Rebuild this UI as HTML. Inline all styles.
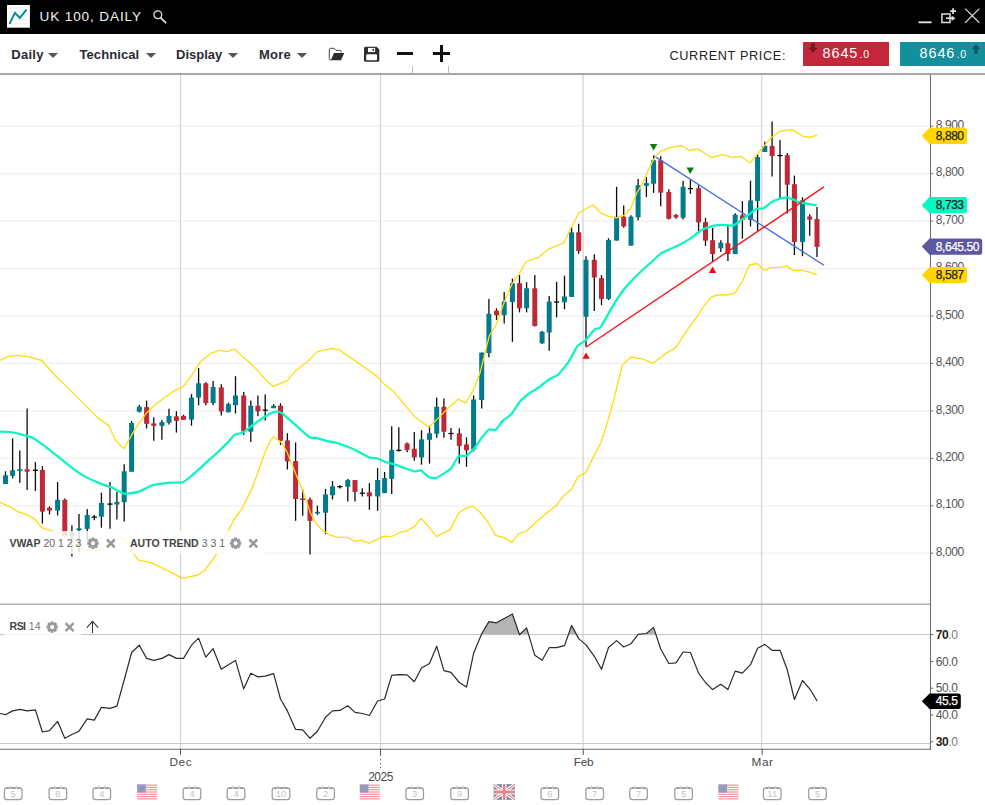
<!DOCTYPE html>
<html><head><meta charset="utf-8"><title>UK 100, DAILY</title>
<style>
html,body{margin:0;padding:0;background:#fff;}
body{width:985px;height:805px;position:relative;overflow:hidden;font-family:"Liberation Sans",sans-serif;}
#hdr{position:absolute;left:0;top:0;width:985px;height:34px;background:#000;}
#hdr .title{position:absolute;left:39.5px;top:8.5px;font-size:13.6px;color:#f0f0f0;letter-spacing:0.86px;line-height:16px;white-space:nowrap;}
#tb{position:absolute;left:0;top:34px;width:985px;height:38.8px;background:#fff;border-bottom:2.3px solid #a6a6a6;}
.mi{position:absolute;top:13px;font-size:13px;font-weight:bold;color:#2a2a32;line-height:15px;white-space:nowrap;}
.dd{position:absolute;top:18.6px;width:0;height:0;border-left:5.2px solid transparent;border-right:5.2px solid transparent;border-top:5.6px solid #555;}
.cp{position:absolute;left:669.5px;top:15.1px;font-size:12.7px;color:#222;letter-spacing:0.64px;line-height:15px;white-space:nowrap;}
.pb{position:absolute;top:8px;height:24px;color:#fff;font-size:14.4px;line-height:22.4px;white-space:nowrap;letter-spacing:0.95px;}
.pb small{font-size:10.5px;letter-spacing:0.8px;margin-left:1.2px;}
#chart{position:absolute;left:0;top:0;}
</style></head><body>
<div id="hdr">
<svg style="position:absolute;left:7px;top:5px" width="23" height="23" viewBox="7 5 23 23"><rect x="7" y="5" width="22.9" height="22.7" fill="#fff"/><path d="M9.1 7.9H27.4M9.1 11.4H27.4M9.1 15.3H27.4M9.1 19.6H27.4M9.1 23.8H27.4" stroke="#eeeeee" stroke-width="1.1"/><path d="M9.9 23.1L15 12.9L19.8 17.9L26.1 10.2" stroke="#0a8798" stroke-width="2" fill="none" stroke-linejoin="miter" stroke-linecap="round"/></svg>
<div class="title">UK 100, DAILY</div>
<svg style="position:absolute;left:152px;top:8.5px" width="16" height="16" viewBox="0 0 16 16"><circle cx="5.8" cy="5.8" r="3.9" stroke="#e2e2e2" stroke-width="1.3" fill="none"/><path d="M8.8 8.8L13.6 13.6" stroke="#e2e2e2" stroke-width="1.8" stroke-linecap="round"/></svg>
<svg style="position:absolute;left:910px;top:0px" width="75" height="34" viewBox="910 0 75 34"><path d="M918.6 22.3H931.6" stroke="#e0e0e0" stroke-width="1.9"/><path d="M941.9 13.9H950V22.4H941.9Z" stroke="#dedede" stroke-width="1.5" fill="none"/><path d="M946 18.2H952" stroke="#dedede" stroke-width="1.7"/><path d="M951.6 15.4L955.4 18.2L951.6 21Z" fill="#dedede"/><path d="M953.1 8.2V14M950.2 11.1H956" stroke="#e4e4e4" stroke-width="1.7"/><path d="M965.2 8.6L979.3 22.8M979.3 8.6L965.2 22.8" stroke="#d6d6d6" stroke-width="1.25"/></svg>
</div>
<div id="tb">
<div class="mi" style="left:11.2px;letter-spacing:0.3px">Daily</div><div class="dd" style="left:48px"></div>
<div class="mi" style="left:79.5px;letter-spacing:0.08px">Technical</div><div class="dd" style="left:145.7px"></div>
<div class="mi" style="left:176px">Display</div><div class="dd" style="left:228px"></div>
<div class="mi" style="left:258.9px;letter-spacing:0.3px">More</div><div class="dd" style="left:296.8px"></div>
<svg style="position:absolute;left:320px;top:6px" width="70" height="30" viewBox="320 40 70 30"><path d="M331.2 60.1Q329.3 60.1 329.3 58.6V49.6Q329.3 48.3 330.6 48.3H334.2L336 50.4H340.2Q341.1 50.4 341.1 51.6V52.6" stroke="#2e2e2e" stroke-width="0.9" fill="none"/><path d="M334 53.1H344.3L340.9 60.2H330.8Z" fill="#2c2c2c"/>
<path d="M365.6 46.8H376.6L379.3 49.4V60.2Q379.3 61.8 377.7 61.8H365.6Q364 61.8 364 60.2V48.4Q364 46.8 365.6 46.8Z" fill="#2c2c2c"/><rect x="368" y="47.9" width="7.1" height="4.2" fill="#fff"/><rect x="372.5" y="48.8" width="1.5" height="2.1" fill="#2c2c2c"/><rect x="366.2" y="54.2" width="10.8" height="6.1" rx="0.9" fill="#fff"/></svg>
<div style="position:absolute;left:397px;top:17.6px;width:16.4px;height:3.6px;background:#111"></div>
<div style="position:absolute;left:433px;top:17.6px;width:16.8px;height:3.6px;background:#111"></div>
<div style="position:absolute;left:439.6px;top:11.2px;width:3.6px;height:16.4px;background:#111"></div>
<div style="position:absolute;left:412px;top:31.5px;width:1px;height:8px;background:#bbb"></div>
<div style="position:absolute;left:448.4px;top:31.5px;width:1px;height:8px;background:#bbb"></div>
<div class="cp">CURRENT PRICE:</div>
<div class="pb" style="left:803px;width:86px;background:#c3283a"><span style="position:absolute;left:19.5px">8645<small>.0</small></span>
<svg style="position:absolute;left:5px;top:0.5px" width="10" height="10" viewBox="0 0 10 10"><path d="M3 0H7V4.8H9.6L5 9.8L0.4 4.8H3Z" fill="#7d1320"/></svg></div>
<div class="pb" style="left:900px;width:85px;background:#14909c"><span style="position:absolute;left:19.5px">8646<small>.0</small></span>
<svg style="position:absolute;left:71px;top:1.5px" width="10" height="10" viewBox="0 0 10 10"><path d="M3 9.8H7V5H9.6L5 0L0.4 5H3Z" fill="#0b5d66"/></svg></div>
</div>
<svg id="chart" width="985" height="805" viewBox="0 0 985 805">
<defs><clipPath id="cp"><rect x="0" y="75" width="985" height="730"/></clipPath></defs>
<g clip-path="url(#cp)">
<line x1="0" y1="126.2" x2="929" y2="126.2" stroke="#f0f0f0" stroke-width="1.3"/>
<line x1="0" y1="173.7" x2="929" y2="173.7" stroke="#f0f0f0" stroke-width="1.3"/>
<line x1="0" y1="221.1" x2="929" y2="221.1" stroke="#f0f0f0" stroke-width="1.3"/>
<line x1="0" y1="268.6" x2="929" y2="268.6" stroke="#f0f0f0" stroke-width="1.3"/>
<line x1="0" y1="316" x2="929" y2="316" stroke="#f0f0f0" stroke-width="1.3"/>
<line x1="0" y1="363.4" x2="929" y2="363.4" stroke="#f0f0f0" stroke-width="1.3"/>
<line x1="0" y1="410.9" x2="929" y2="410.9" stroke="#f0f0f0" stroke-width="1.3"/>
<line x1="0" y1="458.4" x2="929" y2="458.4" stroke="#f0f0f0" stroke-width="1.3"/>
<line x1="0" y1="505.8" x2="929" y2="505.8" stroke="#f0f0f0" stroke-width="1.3"/>
<line x1="0" y1="553.2" x2="929" y2="553.2" stroke="#f0f0f0" stroke-width="1.3"/>
<line x1="180.5" y1="75" x2="180.5" y2="749" stroke="#d2d2d2" stroke-width="1.2"/>
<line x1="380.5" y1="75" x2="380.5" y2="749" stroke="#d4d4d4" stroke-width="1.2"/>
<line x1="583.05" y1="75" x2="583.05" y2="749" stroke="#e1e1e1" stroke-width="1.9"/>
<line x1="761.6" y1="75" x2="761.6" y2="749" stroke="#dadada" stroke-width="1.5"/>
<line x1="5.5" y1="471.3" x2="5.5" y2="483.9" stroke="#0c0c0c" stroke-width="1.3"/>
<rect x="3" y="475.4" width="5" height="8.5" fill="#027b8c"/>
<line x1="12.6" y1="438.3" x2="12.6" y2="478.4" stroke="#0c0c0c" stroke-width="1.3"/>
<rect x="10.1" y="470.3" width="5" height="5.5" fill="#027b8c"/>
<line x1="19.8" y1="450.5" x2="19.8" y2="482.9" stroke="#0c0c0c" stroke-width="1.3"/>
<rect x="17.3" y="469.2" width="5" height="1.7" fill="#027b8c"/>
<line x1="27.1" y1="408.6" x2="27.1" y2="490" stroke="#0c0c0c" stroke-width="1.3"/>
<rect x="24.6" y="469.2" width="5" height="2.5" fill="#be2837"/>
<line x1="35.4" y1="462.1" x2="35.4" y2="491" stroke="#0c0c0c" stroke-width="1.3"/>
<line x1="32.8" y1="470.3" x2="38" y2="470.3" stroke="#0c0c0c" stroke-width="1.3"/>
<line x1="42.4" y1="466.2" x2="42.4" y2="523.6" stroke="#0c0c0c" stroke-width="1.3"/>
<rect x="39.9" y="469.9" width="5" height="41.7" fill="#be2837"/>
<line x1="49.5" y1="506.3" x2="49.5" y2="514.5" stroke="#0c0c0c" stroke-width="1.3"/>
<rect x="47" y="507.9" width="5" height="2.7" fill="#be2837"/>
<line x1="57.6" y1="482.1" x2="57.6" y2="515.5" stroke="#0c0c0c" stroke-width="1.3"/>
<rect x="55.1" y="499.8" width="5" height="10.8" fill="#027b8c"/>
<line x1="64.8" y1="498.6" x2="64.8" y2="536.4" stroke="#0c0c0c" stroke-width="1.3"/>
<rect x="62.3" y="499.8" width="5" height="36.6" fill="#be2837"/>
<line x1="71.9" y1="525.3" x2="71.9" y2="556.4" stroke="#0c0c0c" stroke-width="1.3"/>
<rect x="69.4" y="532" width="5" height="3.4" fill="#027b8c"/>
<line x1="79" y1="514.1" x2="79" y2="551.7" stroke="#0c0c0c" stroke-width="1.3"/>
<rect x="76.5" y="528.3" width="5" height="2" fill="#027b8c"/>
<line x1="87.2" y1="509" x2="87.2" y2="540.5" stroke="#0c0c0c" stroke-width="1.3"/>
<rect x="84.7" y="515.1" width="5" height="13.8" fill="#027b8c"/>
<line x1="94.3" y1="515.1" x2="94.3" y2="520.2" stroke="#0c0c0c" stroke-width="1.3"/>
<line x1="91.7" y1="517.1" x2="96.9" y2="517.1" stroke="#0c0c0c" stroke-width="1.3"/>
<line x1="101.4" y1="492.7" x2="101.4" y2="527.7" stroke="#0c0c0c" stroke-width="1.3"/>
<rect x="98.9" y="502.9" width="5" height="13.8" fill="#027b8c"/>
<line x1="110" y1="482.1" x2="110" y2="528.7" stroke="#0c0c0c" stroke-width="1.3"/>
<line x1="107.4" y1="504.1" x2="112.6" y2="504.1" stroke="#0c0c0c" stroke-width="1.3"/>
<line x1="116.9" y1="492.1" x2="116.9" y2="519.6" stroke="#0c0c0c" stroke-width="1.3"/>
<rect x="114.4" y="501.8" width="5" height="2.7" fill="#027b8c"/>
<line x1="124.2" y1="464.2" x2="124.2" y2="521.6" stroke="#0c0c0c" stroke-width="1.3"/>
<rect x="121.7" y="471.3" width="5" height="30.9" fill="#027b8c"/>
<line x1="131.6" y1="421" x2="131.6" y2="471.7" stroke="#0c0c0c" stroke-width="1.3"/>
<rect x="129.1" y="423" width="5" height="48.7" fill="#027b8c"/>
<line x1="139.3" y1="405.1" x2="139.3" y2="412.6" stroke="#0c0c0c" stroke-width="1.3"/>
<rect x="136.8" y="406.7" width="5" height="5.1" fill="#027b8c"/>
<line x1="146.6" y1="400.6" x2="146.6" y2="428.5" stroke="#0c0c0c" stroke-width="1.3"/>
<rect x="144.1" y="407.1" width="5" height="16.7" fill="#be2837"/>
<line x1="153.8" y1="417.3" x2="153.8" y2="440.7" stroke="#0c0c0c" stroke-width="1.3"/>
<rect x="151.3" y="423.4" width="5" height="2.5" fill="#be2837"/>
<line x1="161.9" y1="420" x2="161.9" y2="439.7" stroke="#0c0c0c" stroke-width="1.3"/>
<rect x="159.4" y="422" width="5" height="3.9" fill="#027b8c"/>
<line x1="169" y1="408.8" x2="169" y2="424.4" stroke="#0c0c0c" stroke-width="1.3"/>
<rect x="166.5" y="415.9" width="5" height="6.9" fill="#027b8c"/>
<line x1="176.4" y1="411.2" x2="176.4" y2="432.6" stroke="#0c0c0c" stroke-width="1.3"/>
<rect x="173.9" y="416.3" width="5" height="4.5" fill="#be2837"/>
<line x1="183.5" y1="414.7" x2="183.5" y2="419.8" stroke="#0c0c0c" stroke-width="1.3"/>
<rect x="181" y="415.9" width="5" height="3.9" fill="#be2837"/>
<line x1="191.5" y1="394.1" x2="191.5" y2="425.7" stroke="#0c0c0c" stroke-width="1.3"/>
<rect x="189" y="397.6" width="5" height="22" fill="#027b8c"/>
<line x1="198.6" y1="368.1" x2="198.6" y2="405.3" stroke="#0c0c0c" stroke-width="1.3"/>
<rect x="196.1" y="383.3" width="5" height="14.3" fill="#027b8c"/>
<line x1="205.8" y1="382.3" x2="205.8" y2="405.3" stroke="#0c0c0c" stroke-width="1.3"/>
<rect x="203.3" y="383.3" width="5" height="19.8" fill="#be2837"/>
<line x1="213.1" y1="380.9" x2="213.1" y2="405.3" stroke="#0c0c0c" stroke-width="1.3"/>
<rect x="210.6" y="387" width="5" height="16.1" fill="#027b8c"/>
<line x1="221.3" y1="384.3" x2="221.3" y2="415.5" stroke="#0c0c0c" stroke-width="1.3"/>
<rect x="218.8" y="387.4" width="5" height="24" fill="#be2837"/>
<line x1="228.4" y1="402.7" x2="228.4" y2="412.3" stroke="#0c0c0c" stroke-width="1.3"/>
<rect x="225.9" y="404.1" width="5" height="8.2" fill="#027b8c"/>
<line x1="235.5" y1="376.2" x2="235.5" y2="413.5" stroke="#0c0c0c" stroke-width="1.3"/>
<rect x="233" y="395.5" width="5" height="9.6" fill="#027b8c"/>
<line x1="243.7" y1="392.1" x2="243.7" y2="434.9" stroke="#0c0c0c" stroke-width="1.3"/>
<rect x="241.2" y="395.5" width="5" height="36.1" fill="#be2837"/>
<line x1="250.8" y1="400.6" x2="250.8" y2="442" stroke="#0c0c0c" stroke-width="1.3"/>
<rect x="248.3" y="405.7" width="5" height="25.9" fill="#027b8c"/>
<line x1="257.9" y1="395.5" x2="257.9" y2="416.3" stroke="#0c0c0c" stroke-width="1.3"/>
<rect x="255.4" y="405.7" width="5" height="5.7" fill="#be2837"/>
<line x1="265.2" y1="394.5" x2="265.2" y2="420.4" stroke="#0c0c0c" stroke-width="1.3"/>
<line x1="262.6" y1="410.2" x2="267.8" y2="410.2" stroke="#0c0c0c" stroke-width="1.3"/>
<line x1="273.6" y1="404.1" x2="273.6" y2="408.2" stroke="#0c0c0c" stroke-width="1.3"/>
<rect x="271.1" y="405.7" width="5" height="2.5" fill="#027b8c"/>
<line x1="280.5" y1="403.3" x2="280.5" y2="445" stroke="#0c0c0c" stroke-width="1.3"/>
<rect x="278" y="405.7" width="5" height="35.1" fill="#be2837"/>
<line x1="287.4" y1="433.2" x2="287.4" y2="469.5" stroke="#0c0c0c" stroke-width="1.3"/>
<rect x="284.9" y="440.4" width="5" height="20.9" fill="#be2837"/>
<line x1="295.6" y1="442.4" x2="295.6" y2="520.8" stroke="#0c0c0c" stroke-width="1.3"/>
<rect x="293.1" y="461.1" width="5" height="37.9" fill="#be2837"/>
<line x1="302.7" y1="489.2" x2="302.7" y2="515.7" stroke="#0c0c0c" stroke-width="1.3"/>
<rect x="300.2" y="498.4" width="5" height="1.6" fill="#be2837"/>
<line x1="310" y1="497.4" x2="310" y2="554.5" stroke="#0c0c0c" stroke-width="1.3"/>
<rect x="307.5" y="499.5" width="5" height="21.4" fill="#be2837"/>
<line x1="317.4" y1="505.6" x2="317.4" y2="514.9" stroke="#0c0c0c" stroke-width="1.3"/>
<rect x="314.9" y="511.9" width="5" height="1.6" fill="#027b8c"/>
<line x1="325.5" y1="488.9" x2="325.5" y2="534.1" stroke="#0c0c0c" stroke-width="1.3"/>
<rect x="323" y="494.5" width="5" height="18.2" fill="#027b8c"/>
<line x1="332.5" y1="481.1" x2="332.5" y2="499.5" stroke="#0c0c0c" stroke-width="1.3"/>
<rect x="330" y="486.3" width="5" height="8.9" fill="#027b8c"/>
<line x1="339.8" y1="485.2" x2="339.8" y2="488.4" stroke="#0c0c0c" stroke-width="1.3"/>
<line x1="337.2" y1="486.7" x2="342.4" y2="486.7" stroke="#0c0c0c" stroke-width="1.3"/>
<line x1="347.8" y1="479.1" x2="347.8" y2="501.6" stroke="#0c0c0c" stroke-width="1.3"/>
<rect x="345.3" y="480.1" width="5" height="6.7" fill="#027b8c"/>
<line x1="355" y1="480.1" x2="355" y2="501.6" stroke="#0c0c0c" stroke-width="1.3"/>
<rect x="352.5" y="480.1" width="5" height="11.8" fill="#be2837"/>
<line x1="362.3" y1="488.3" x2="362.3" y2="496.5" stroke="#0c0c0c" stroke-width="1.3"/>
<line x1="359.7" y1="493.2" x2="364.9" y2="493.2" stroke="#0c0c0c" stroke-width="1.3"/>
<line x1="369.4" y1="483.2" x2="369.4" y2="509.8" stroke="#0c0c0c" stroke-width="1.3"/>
<rect x="366.9" y="492.3" width="5" height="4.1" fill="#be2837"/>
<line x1="377.6" y1="467.9" x2="377.6" y2="510.8" stroke="#0c0c0c" stroke-width="1.3"/>
<rect x="375.1" y="480.1" width="5" height="16.3" fill="#027b8c"/>
<line x1="384.6" y1="472" x2="384.6" y2="493.1" stroke="#0c0c0c" stroke-width="1.3"/>
<rect x="382.1" y="478.1" width="5" height="15" fill="#027b8c"/>
<line x1="391.7" y1="426.2" x2="391.7" y2="494" stroke="#0c0c0c" stroke-width="1.3"/>
<rect x="389.2" y="450" width="5" height="28.8" fill="#027b8c"/>
<line x1="398.8" y1="427.2" x2="398.8" y2="451.4" stroke="#0c0c0c" stroke-width="1.3"/>
<line x1="396.2" y1="450.4" x2="401.4" y2="450.4" stroke="#0c0c0c" stroke-width="1.3"/>
<line x1="407.1" y1="442.4" x2="407.1" y2="452.3" stroke="#0c0c0c" stroke-width="1.3"/>
<rect x="404.6" y="443.5" width="5" height="6.4" fill="#be2837"/>
<line x1="414.3" y1="432.1" x2="414.3" y2="460.7" stroke="#0c0c0c" stroke-width="1.3"/>
<rect x="411.8" y="448.8" width="5" height="8.6" fill="#be2837"/>
<line x1="421.5" y1="430.2" x2="421.5" y2="464.7" stroke="#0c0c0c" stroke-width="1.3"/>
<rect x="419" y="439.4" width="5" height="18" fill="#027b8c"/>
<line x1="429.5" y1="425.5" x2="429.5" y2="463.7" stroke="#0c0c0c" stroke-width="1.3"/>
<rect x="427" y="433.3" width="5" height="6.5" fill="#027b8c"/>
<line x1="436.7" y1="397.6" x2="436.7" y2="437.8" stroke="#0c0c0c" stroke-width="1.3"/>
<rect x="434.2" y="406.8" width="5" height="26.9" fill="#027b8c"/>
<line x1="443.9" y1="398.5" x2="443.9" y2="437.8" stroke="#0c0c0c" stroke-width="1.3"/>
<rect x="441.4" y="406.8" width="5" height="24.9" fill="#be2837"/>
<line x1="451" y1="428" x2="451" y2="439.8" stroke="#0c0c0c" stroke-width="1.3"/>
<line x1="448.4" y1="433.5" x2="453.6" y2="433.5" stroke="#0c0c0c" stroke-width="1.3"/>
<line x1="459.3" y1="428.2" x2="459.3" y2="463.7" stroke="#0c0c0c" stroke-width="1.3"/>
<rect x="456.8" y="433.3" width="5" height="12.6" fill="#be2837"/>
<line x1="466.5" y1="437.4" x2="466.5" y2="466.8" stroke="#0c0c0c" stroke-width="1.3"/>
<rect x="464" y="444.5" width="5" height="5.8" fill="#be2837"/>
<line x1="473.6" y1="395.4" x2="473.6" y2="451.4" stroke="#0c0c0c" stroke-width="1.3"/>
<rect x="471.1" y="399.5" width="5" height="50" fill="#027b8c"/>
<line x1="481.7" y1="352.6" x2="481.7" y2="408.6" stroke="#0c0c0c" stroke-width="1.3"/>
<rect x="479.2" y="352.6" width="5" height="47.5" fill="#027b8c"/>
<line x1="488.9" y1="299.1" x2="488.9" y2="357.2" stroke="#0c0c0c" stroke-width="1.3"/>
<rect x="486.4" y="313.8" width="5" height="39.2" fill="#027b8c"/>
<line x1="496.5" y1="308.3" x2="496.5" y2="319.9" stroke="#0c0c0c" stroke-width="1.3"/>
<rect x="494" y="310.7" width="5" height="4.5" fill="#be2837"/>
<line x1="504.2" y1="292" x2="504.2" y2="323.6" stroke="#0c0c0c" stroke-width="1.3"/>
<rect x="501.7" y="301.6" width="5" height="13.6" fill="#027b8c"/>
<line x1="512.4" y1="278.7" x2="512.4" y2="341.9" stroke="#0c0c0c" stroke-width="1.3"/>
<rect x="509.9" y="283.2" width="5" height="18.8" fill="#027b8c"/>
<line x1="519.5" y1="275.1" x2="519.5" y2="312.4" stroke="#0c0c0c" stroke-width="1.3"/>
<rect x="517" y="283.2" width="5" height="25.1" fill="#be2837"/>
<line x1="526.6" y1="282.2" x2="526.6" y2="312.4" stroke="#0c0c0c" stroke-width="1.3"/>
<rect x="524.1" y="288.3" width="5" height="20" fill="#027b8c"/>
<line x1="534.8" y1="275.1" x2="534.8" y2="326.6" stroke="#0c0c0c" stroke-width="1.3"/>
<rect x="532.3" y="288.3" width="5" height="37.7" fill="#be2837"/>
<line x1="542.1" y1="331.1" x2="542.1" y2="343.9" stroke="#0c0c0c" stroke-width="1.3"/>
<rect x="539.6" y="331.7" width="5" height="11.6" fill="#027b8c"/>
<line x1="549.2" y1="296.1" x2="549.2" y2="350.8" stroke="#0c0c0c" stroke-width="1.3"/>
<rect x="546.7" y="301.6" width="5" height="30.9" fill="#027b8c"/>
<line x1="556.6" y1="281.8" x2="556.6" y2="317.4" stroke="#0c0c0c" stroke-width="1.3"/>
<line x1="554" y1="302" x2="559.2" y2="302" stroke="#0c0c0c" stroke-width="1.3"/>
<line x1="564.5" y1="275.7" x2="564.5" y2="309.3" stroke="#0c0c0c" stroke-width="1.3"/>
<rect x="562" y="296.5" width="5" height="5.7" fill="#027b8c"/>
<line x1="571.6" y1="227.2" x2="571.6" y2="296.9" stroke="#0c0c0c" stroke-width="1.3"/>
<rect x="569.1" y="232.3" width="5" height="64.6" fill="#027b8c"/>
<line x1="578.7" y1="223.8" x2="578.7" y2="253.7" stroke="#0c0c0c" stroke-width="1.3"/>
<rect x="576.2" y="232.3" width="5" height="18.7" fill="#be2837"/>
<line x1="586" y1="256.3" x2="586" y2="347" stroke="#0c0c0c" stroke-width="1.3"/>
<rect x="583.5" y="259.8" width="5" height="57" fill="#027b8c"/>
<line x1="594.3" y1="254.3" x2="594.3" y2="311.1" stroke="#0c0c0c" stroke-width="1.3"/>
<rect x="591.8" y="259.8" width="5" height="17.7" fill="#be2837"/>
<line x1="601.5" y1="275.1" x2="601.5" y2="305.2" stroke="#0c0c0c" stroke-width="1.3"/>
<rect x="599" y="278.1" width="5" height="20.8" fill="#be2837"/>
<line x1="608.5" y1="238.2" x2="608.5" y2="300.1" stroke="#0c0c0c" stroke-width="1.3"/>
<rect x="606" y="240.1" width="5" height="58.8" fill="#027b8c"/>
<line x1="616.6" y1="186.8" x2="616.6" y2="240.6" stroke="#0c0c0c" stroke-width="1.3"/>
<rect x="614.1" y="216.7" width="5" height="23.9" fill="#027b8c"/>
<line x1="623.7" y1="205.5" x2="623.7" y2="227.8" stroke="#0c0c0c" stroke-width="1.3"/>
<rect x="621.2" y="216.7" width="5" height="9.7" fill="#be2837"/>
<line x1="631" y1="215.3" x2="631" y2="245.6" stroke="#0c0c0c" stroke-width="1.3"/>
<rect x="628.5" y="216.7" width="5" height="28.9" fill="#027b8c"/>
<line x1="638.1" y1="179.1" x2="638.1" y2="220.4" stroke="#0c0c0c" stroke-width="1.3"/>
<rect x="635.6" y="185.2" width="5" height="32.2" fill="#027b8c"/>
<line x1="646.4" y1="177" x2="646.4" y2="197" stroke="#0c0c0c" stroke-width="1.3"/>
<rect x="643.9" y="183.1" width="5" height="2.7" fill="#027b8c"/>
<line x1="653.6" y1="155.6" x2="653.6" y2="192.9" stroke="#0c0c0c" stroke-width="1.3"/>
<rect x="651.1" y="160.3" width="5" height="23.4" fill="#027b8c"/>
<line x1="660.7" y1="156.3" x2="660.7" y2="206.2" stroke="#0c0c0c" stroke-width="1.3"/>
<rect x="658.2" y="160.3" width="5" height="32.4" fill="#be2837"/>
<line x1="668.8" y1="189.2" x2="668.8" y2="219.4" stroke="#0c0c0c" stroke-width="1.3"/>
<rect x="666.3" y="191.9" width="5" height="26.9" fill="#be2837"/>
<line x1="676" y1="214" x2="676" y2="218.8" stroke="#0c0c0c" stroke-width="1.3"/>
<rect x="673.5" y="215.1" width="5" height="2.3" fill="#be2837"/>
<line x1="683.1" y1="180.7" x2="683.1" y2="219.4" stroke="#0c0c0c" stroke-width="1.3"/>
<rect x="680.6" y="186.8" width="5" height="31" fill="#027b8c"/>
<line x1="690.4" y1="179.1" x2="690.4" y2="193.9" stroke="#0c0c0c" stroke-width="1.3"/>
<line x1="687.8" y1="188.6" x2="693" y2="188.6" stroke="#0c0c0c" stroke-width="1.3"/>
<line x1="698.6" y1="185.2" x2="698.6" y2="231" stroke="#0c0c0c" stroke-width="1.3"/>
<rect x="696.1" y="188.2" width="5" height="34.2" fill="#be2837"/>
<line x1="705.5" y1="217.8" x2="705.5" y2="245.9" stroke="#0c0c0c" stroke-width="1.3"/>
<rect x="703" y="222.2" width="5" height="18.4" fill="#be2837"/>
<line x1="712.6" y1="227.9" x2="712.6" y2="261.5" stroke="#0c0c0c" stroke-width="1.3"/>
<rect x="710.1" y="240.2" width="5" height="13.8" fill="#be2837"/>
<line x1="720.8" y1="240.2" x2="720.8" y2="252" stroke="#0c0c0c" stroke-width="1.3"/>
<rect x="718.3" y="242.6" width="5" height="5.7" fill="#027b8c"/>
<line x1="727.9" y1="225.9" x2="727.9" y2="261.1" stroke="#0c0c0c" stroke-width="1.3"/>
<rect x="725.4" y="243.2" width="5" height="10.8" fill="#be2837"/>
<line x1="735.2" y1="213.3" x2="735.2" y2="254" stroke="#0c0c0c" stroke-width="1.3"/>
<rect x="732.7" y="214.7" width="5" height="39.3" fill="#027b8c"/>
<line x1="742.4" y1="201.1" x2="742.4" y2="238.7" stroke="#0c0c0c" stroke-width="1.3"/>
<rect x="739.9" y="215.3" width="5" height="4.5" fill="#be2837"/>
<line x1="750.5" y1="180.7" x2="750.5" y2="226.5" stroke="#0c0c0c" stroke-width="1.3"/>
<rect x="748" y="200.4" width="5" height="19.4" fill="#027b8c"/>
<line x1="757.6" y1="154.2" x2="757.6" y2="231" stroke="#0c0c0c" stroke-width="1.3"/>
<rect x="755.1" y="157.1" width="5" height="43.8" fill="#027b8c"/>
<line x1="764.8" y1="141.8" x2="764.8" y2="152" stroke="#0c0c0c" stroke-width="1.3"/>
<rect x="762.3" y="145.9" width="5" height="6.1" fill="#027b8c"/>
<line x1="772.1" y1="121.6" x2="772.1" y2="176.6" stroke="#0c0c0c" stroke-width="1.3"/>
<rect x="769.6" y="145.9" width="5" height="10.1" fill="#be2837"/>
<line x1="780" y1="140" x2="780" y2="198" stroke="#0c0c0c" stroke-width="1.3"/>
<line x1="777.4" y1="155.6" x2="782.6" y2="155.6" stroke="#0c0c0c" stroke-width="1.3"/>
<line x1="787.3" y1="152.9" x2="787.3" y2="213.6" stroke="#0c0c0c" stroke-width="1.3"/>
<rect x="784.8" y="155.1" width="5" height="29.6" fill="#be2837"/>
<line x1="794.4" y1="175.6" x2="794.4" y2="255.1" stroke="#0c0c0c" stroke-width="1.3"/>
<rect x="791.9" y="184.2" width="5" height="57.8" fill="#be2837"/>
<line x1="802.5" y1="197.2" x2="802.5" y2="256.2" stroke="#0c0c0c" stroke-width="1.3"/>
<rect x="800" y="200.3" width="5" height="41.7" fill="#027b8c"/>
<line x1="809.7" y1="214.3" x2="809.7" y2="235.7" stroke="#0c0c0c" stroke-width="1.3"/>
<rect x="807.2" y="216.5" width="5" height="3.1" fill="#be2837"/>
<line x1="817" y1="207.1" x2="817" y2="257" stroke="#0c0c0c" stroke-width="1.3"/>
<rect x="814.5" y="219" width="5" height="27.9" fill="#be2837"/>
<line x1="653.6" y1="155.6" x2="824" y2="265.3" stroke="#4a6ee0" stroke-width="1.3"/>
<polyline points="0,360.5 7.6,356.6 17.8,355.4 27.9,356.6 41.9,360.5 55.8,376.2 68.5,388.4 83.8,403.6 97.7,417.6 109.1,425.9 115.5,440.4 123.9,448.8 130.7,436.6 137.1,425.9 145.9,413.8 154.8,404.9 165,397.3 175.1,390.4 182.7,387.1 191.6,375.7 200.5,361.7 210.7,353.4 219.5,350.3 227.2,351.6 234.8,349 242.4,356.6 250.2,363 257.8,370.6 265.4,379.5 273,386.3 287,380.8 295.8,370.6 307.3,361.7 317.4,351.6 332.6,348.3 339,349.8 349.1,356.6 361.8,365.5 377.1,376.4 384.7,384.6 393.1,390.9 403.3,403.1 413.5,415.4 428.8,427.2 438,418.4 448.1,408.2 458.3,399.1 465.7,403 472.9,391.2 479.9,373.3 484.9,353.4 489.4,335.5 495.4,326.5 500.8,311.6 506.7,295.7 512.7,282.8 519.6,272.9 526.2,261.5 538.5,257.3 548.7,249.1 563.9,242.8 571.5,226.8 579.1,212.8 593.1,204.7 600.7,212.8 608.3,216.4 616.8,217.8 624.6,215 630.8,208.2 636.5,193.5 642.8,183.1 648.9,168.9 654,158.7 660.1,151.6 669.2,147.9 681.5,145.5 689.6,150.5 697.8,148.9 712,157.7 722.2,154.6 732.4,157.3 741,156.5 750,163.1 760.6,150.1 770.8,137.9 780,131.1 792,129.7 803.1,136.1 809.2,137.5 816.4,135.5" fill="none" stroke="#ffdb12" stroke-width="1.3" stroke-linejoin="round" stroke-linecap="round" />
<polyline points="0,502.4 10,506.8 18.1,511.6 26.8,514.6 34.8,519.4 42.3,528 48.5,529.8 55,531.8 63.5,534.4 76.1,546.6 88.8,551.2 101.5,549.1 111.7,541.5 119.3,537.7 124.4,539 132,551.7 138.3,559.8 152.3,563.1 165,569.4 182.7,578.3 198,575 205.6,569.4 215.7,555.5 223.4,541.5 228.5,530.4 233.7,520 242.4,507.8 251.1,490.4 258,472.2 264.1,454.8 269.3,442.6 273.2,437 280.7,441.7 286.7,451.3 293.7,468.7 299.8,483.5 305,496.5 310.2,512.2 315.4,522.6 322.4,530.4 329.3,534.8 338,537.4 347.2,537.4 354.9,541.4 361.5,540.2 368.6,543.3 383.9,536.1 391.6,536.7 399.1,532.7 407.3,530.6 414.4,526.6 421.1,518.4 428.7,526.6 436.4,536.7 450.1,529.6 459.2,512.3 466.4,508.2 472.9,506 480.3,512.5 487.9,522.1 495.5,535.3 503.1,537.4 512,542.4 518.9,533.6 526,531.5 536.1,522.1 546.3,513.2 556.4,505.6 564.1,495.2 571.6,489.3 578.2,476.4 585.4,473.2 593.2,457.4 600.9,442.7 607.2,423.1 613.6,400.3 618.6,380 622.3,365.1 631.2,357 642.6,358.8 652.7,363.4 665.4,353.7 675.6,347.9 688.3,328.3 697.6,316 705.2,303.9 712.1,296.5 720.5,294.7 727.3,295 734.9,293.2 742.5,281 749.4,265 757,263.5 764.3,270.4 770.7,267.6 779.8,267.3 786.4,266.1 793.5,270.4 801.9,270.4 808.8,271.9 816.4,274.6" fill="none" stroke="#ffdb12" stroke-width="1.3" stroke-linejoin="round" stroke-linecap="round" />
<path d="M0 431.5C0.8 431.5 8.5 431.8 10.2 432C11.9 432.2 18.4 433.6 20.3 434.1C22.2 434.6 30.9 436.8 33 437.9C35.1 439 43.6 445.2 45.7 446.8C47.8 448.4 56.3 455.2 58.4 456.9C60.5 458.6 69 465.5 71.1 467.1C73.2 468.7 81.4 474.5 83.8 475.9C86.2 477.3 98 482.6 100.3 483.6C102.6 484.6 109.7 486.6 111.7 487.4C113.7 488.2 122.2 493.3 124.4 493.7C126.6 494.1 136 492.6 138.3 491.9C140.6 491.2 149.9 486.1 152.3 485.3C154.7 484.5 165 483.1 167.5 482.8C170 482.6 180.6 483 182.7 482.3C184.8 481.6 191 476.3 192.9 474.7C194.8 473.1 203.5 465.1 205.6 463.2C207.7 461.3 216.4 453.6 218.3 451.8C220.2 450 227 443.1 228.4 441.7C229.8 440.3 233.6 435.3 234.8 434.6C236 433.9 240.9 433.6 242.4 432.8C243.9 432 250.8 426.6 252.7 425.2C254.6 423.8 263.5 417.4 265.4 416.3C267.3 415.2 274.1 412 275.5 411.7C276.9 411.4 280.2 412.1 281.9 413.2C283.6 414.3 293.5 423.2 295.8 425.2C298.1 427.2 308.1 436.3 309.8 437.4C311.5 438.5 314.7 437.6 316.1 437.9C317.5 438.2 324.6 440.5 326.3 440.9C328 441.3 334.5 442.4 336.4 442.9C338.3 443.4 347 446.4 349.1 447.3C351.2 448.2 360.1 452.5 361.8 453.4C363.5 454.3 368.3 457.2 369.5 457.6C370.7 458 375.1 457.6 376.4 458C377.7 458.4 383.4 461.2 385 461.8C386.6 462.4 393.5 464.1 395.2 464.6C396.9 465.1 403.8 467.7 405.4 468.3C407 468.9 413.2 471.2 414.5 471.4C415.8 471.6 419.4 469.8 420.6 470.3C421.8 470.8 427.5 476.2 428.8 476.9C430.1 477.5 434.6 478.4 435.9 478.1C437.2 477.8 442.8 474.2 444.1 473.4C445.4 472.6 450 469.7 451.2 468.3C452.4 466.9 457 457.6 458.3 456.5C459.6 455.4 465.1 456.4 466.5 455.7C467.9 455 473.3 449.4 474.6 447.9C475.9 446.4 480.5 439.3 481.7 437.8C482.9 436.3 487.7 430.3 488.9 429.6C490.1 428.9 494.8 430.4 496 429.6C497.2 428.8 501.8 421.7 503.1 420.4C504.4 419.1 509.9 415.9 511.3 414.3C512.7 412.7 519 402.7 520.4 401.1C521.8 399.5 526 395.8 527.6 394.6C529.2 393.4 537.9 388.1 539.8 386.8C541.7 385.5 548.5 379.7 550 378.7C551.5 377.7 556.6 376 558.1 374.6C559.6 373.2 566.7 364.8 568.3 362.4C569.9 360 576.1 347.8 577.5 346C578.9 344.2 583.9 341.9 585.3 340.5C586.7 339.1 593.1 330.7 594.4 329.6C595.7 328.5 599.3 328.8 600.7 327.1C602.1 325.4 609.1 312.3 610.9 309.3C612.7 306.3 620.8 293.6 622.3 291.5C623.8 289.4 627 285.6 628.5 284C630 282.4 638.8 273.5 640.7 271.7C642.6 269.9 649.2 264.1 650.9 262.6C652.6 261.1 659 254.8 661.1 253.4C663.2 252 674 247.5 676.4 246.3C678.8 245.1 687.5 240.5 689.6 239.1C691.7 237.7 699.8 231.1 701.8 230C703.8 228.9 711.3 226.3 713 225.9C714.7 225.5 720.5 224.9 722.2 224.9C723.9 224.9 731.8 225.9 733.4 225.5C735 225.1 739.7 221.2 741 220.3C742.3 219.4 747.7 215.4 749 214.5C750.3 213.6 755.3 209.4 756.5 208.9C757.7 208.4 762.4 208.8 763.7 208.2C765 207.6 770.4 202.9 771.8 202.1C773.2 201.3 778.7 199.1 780 198.7C781.3 198.3 786.4 197.6 787.6 197.7C788.8 197.8 793.4 199.6 794.2 199.9C795 200.2 796.8 201.3 797.5 201.6C798.2 201.8 802 202.7 803.1 202.9C804.2 203.1 809.2 204.2 810.3 204.4C811.4 204.6 815.4 205 815.9 205.1" fill="none" stroke="#0af5c0" stroke-width="2.25" stroke-linejoin="round" stroke-linecap="round"/>
<line x1="586" y1="347" x2="824" y2="186.8" stroke="#fb1518" stroke-width="1.4"/>
<polygon points="649.9,144 657.3,144 653.6,150.4" fill="#0a7d0a"/>
<polygon points="686.5,167.5 693.9,167.5 690.2,173.9" fill="#0a7d0a"/>
<polygon points="582.4,358.8 589.8,358.8 586.1,352.4" fill="#f40b10"/>
<polygon points="708.9,272.9 716.3,272.9 712.6,266.5" fill="#f40b10"/>
<rect x="0" y="531" width="265" height="23" fill="#fff" fill-opacity="0.82"/>
<text x="9.5" y="547" font-family="Liberation Sans, sans-serif" font-size="10.5" fill="#444"><tspan font-weight="bold">VWAP</tspan><tspan fill="#666" dx="3">20 1 2 3</tspan></text>
<path d="M91.5 539.2L91.5 537.6L94.5 537.6L94.5 539.2L94.8 539.3L96 538.2L98.1 540.3L97 541.5L97.1 541.8L98.7 541.8L98.7 544.8L97.1 544.8L97 545.1L98.1 546.3L96 548.4L94.8 547.3L94.5 547.4L94.5 549L91.5 549L91.5 547.4L91.2 547.3L90 548.4L87.9 546.3L89 545.1L88.9 544.8L87.3 544.8L87.3 541.8L88.9 541.8L89 541.5L87.9 540.3L90 538.2L91.2 539.3ZM95.1 543.3A2.1 2.1 0 1 0 90.9 543.3A2.1 2.1 0 1 0 95.1 543.3Z" fill="#999" fill-rule="evenodd"/>
<path d="M106.9 539.5L114.7 547.3M114.7 539.5L106.9 547.3" stroke="#999" stroke-width="2.5" fill="none"/>
<text x="130" y="547" font-family="Liberation Sans, sans-serif" font-size="10.5" fill="#444"><tspan font-weight="bold">AUTO TREND</tspan><tspan fill="#666" dx="3">3 3 1</tspan></text>
<path d="M234.1 539.2L234.1 537.6L237.1 537.6L237.1 539.2L237.4 539.3L238.6 538.2L240.7 540.3L239.6 541.5L239.7 541.8L241.3 541.8L241.3 544.8L239.7 544.8L239.6 545.1L240.7 546.3L238.6 548.4L237.4 547.3L237.1 547.4L237.1 549L234.1 549L234.1 547.4L233.8 547.3L232.6 548.4L230.5 546.3L231.6 545.1L231.5 544.8L229.9 544.8L229.9 541.8L231.5 541.8L231.6 541.5L230.5 540.3L232.6 538.2L233.8 539.3ZM237.7 543.3A2.1 2.1 0 1 0 233.5 543.3A2.1 2.1 0 1 0 237.7 543.3Z" fill="#999" fill-rule="evenodd"/>
<path d="M249.4 539.5L257.2 547.3M257.2 539.5L249.4 547.3" stroke="#999" stroke-width="2.5" fill="none"/>
<line x1="0" y1="604.3" x2="931" y2="604.3" stroke="#b2b2b2" stroke-width="1.4"/>
<line x1="0" y1="634.6" x2="931" y2="634.6" stroke="#c4c4c4" stroke-width="1"/>
<line x1="0" y1="743.6" x2="931" y2="743.6" stroke="#c4c4c4" stroke-width="1"/>
<polygon points="481.4,634.6 481.7,633.8 488.9,621.6 496.5,622.8 504.2,618.5 512.4,614 519.4,634.6" fill="#b4b4b4"/>
<polygon points="519.7,634.6 526.6,627.9 528.6,634.6" fill="#b4b4b4"/>
<polygon points="568.4,634.6 571.6,625.4 576.5,634.6" fill="#b4b4b4"/>
<polygon points="637.9,634.6 638.1,634.3 646.4,633.5 653.6,627.4 656,634.6" fill="#b4b4b4"/>
<polyline points="0,713.5 5.5,714.7 12.6,710.9 19.8,709.4 27.1,710.9 35.4,709.9 42.4,732 49.5,730.7 57.6,721.3 64.8,738.3 71.9,734.5 79,731.2 87.2,718.8 94.3,720.1 101.4,707.4 110,708.4 116.9,706.1 124.2,680 131.6,652.5 139.3,645.2 146.6,658.4 153.8,660.4 161.9,658.4 169,654.6 176.4,658.4 183.5,658.4 191.5,645.2 198.6,638.1 205.8,657.1 213.1,648.7 221.3,669.3 228.4,664.7 235.5,660.4 243.7,688.8 250.8,673.3 257.9,676.9 265.2,676.1 273.6,673.6 280.5,699 287.4,710.9 295.6,729.4 302.7,729.9 310,738.3 317.4,731.2 325.5,717.3 332.5,710.9 339.8,710.4 347.8,705.8 355,712.4 362.3,713.5 369.4,715.5 377.6,701 384.6,699 391.7,675.4 398.8,674.6 407.1,674.9 414.3,681.7 421.5,668 429.5,663.5 436.7,646.2 443.9,670.6 451,672.3 459.3,682.5 466.5,687.1 473.6,653.3 481.7,633.8 488.9,621.6 496.5,622.8 504.2,618.5 512.4,614 519.5,634.8 526.6,627.9 534.8,655.3 542.1,660.2 549.2,647.7 556.6,647.7 564.5,645.7 571.6,625.4 578.7,638.6 586,644.9 594.3,656.3 601.5,669.3 608.5,647.5 616.6,640.6 623.7,647 631,643.7 638.1,634.3 646.4,633.5 653.6,627.4 660.7,649 668.8,663.5 676,662.9 683.1,652 690.4,652.5 698.6,673.1 705.5,682.5 712.6,689.6 720.8,684.3 727.9,689.6 735.2,671.1 742.4,673.1 750.5,664.7 757.6,648.2 764.8,644.4 772.1,650.3 780,650.3 787.3,669.8 794.4,699.5 802.5,680.5 809.7,688.8 817,700.8" fill="none" stroke="#2a2a2a" stroke-width="1.2" stroke-linejoin="round" stroke-linecap="round" />
<rect x="4" y="616" width="77" height="20" fill="#fff" fill-opacity="0.82"/>
<text x="9.6" y="630.4" font-family="Liberation Sans, sans-serif" font-size="10.5" fill="#444"><tspan font-weight="bold" letter-spacing="-0.55">RSI</tspan><tspan fill="#777" dx="3.4">14</tspan></text>
<path d="M50.7 623L50.7 621.4L53.7 621.4L53.7 623L54 623.1L55.2 622L57.3 624.1L56.2 625.3L56.3 625.6L57.9 625.6L57.9 628.6L56.3 628.6L56.2 628.9L57.3 630.1L55.2 632.2L54 631.1L53.7 631.2L53.7 632.8L50.7 632.8L50.7 631.2L50.4 631.1L49.2 632.2L47.1 630.1L48.2 628.9L48.1 628.6L46.5 628.6L46.5 625.6L48.1 625.6L48.2 625.3L47.1 624.1L49.2 622L50.4 623.1ZM54.3 627.1A2.1 2.1 0 1 0 50.1 627.1A2.1 2.1 0 1 0 54.3 627.1Z" fill="#999" fill-rule="evenodd"/>
<path d="M65.6 623.2L73.6 631.2M73.6 623.2L65.6 631.2" stroke="#999" stroke-width="2.5" fill="none"/>
<path d="M92.5 633V621.6M86.8 627.7L92.5 621.4L98.2 627.7" stroke="#333" stroke-width="1.05" fill="none"/>
<line x1="930.5" y1="75" x2="930.5" y2="749.8" stroke="#6e6e6e" stroke-width="1.1"/>
<line x1="0" y1="749.3" x2="931" y2="749.3" stroke="#6e6e6e" stroke-width="1.1"/>
<line x1="931" y1="126.2" x2="933.4" y2="126.2" stroke="#777" stroke-width="1"/>
<text x="935.8" y="128.8" font-family="Liberation Sans, sans-serif" font-size="12" fill="#555" letter-spacing="-0.42">8,900</text>
<line x1="931" y1="173.7" x2="933.4" y2="173.7" stroke="#777" stroke-width="1"/>
<text x="935.8" y="176.2" font-family="Liberation Sans, sans-serif" font-size="12" fill="#555" letter-spacing="-0.42">8,800</text>
<line x1="931" y1="221.1" x2="933.4" y2="221.1" stroke="#777" stroke-width="1"/>
<text x="935.8" y="223.7" font-family="Liberation Sans, sans-serif" font-size="12" fill="#555" letter-spacing="-0.42">8,700</text>
<line x1="931" y1="268.6" x2="933.4" y2="268.6" stroke="#777" stroke-width="1"/>
<text x="935.8" y="271.2" font-family="Liberation Sans, sans-serif" font-size="12" fill="#555" letter-spacing="-0.42">8,600</text>
<line x1="931" y1="316" x2="933.4" y2="316" stroke="#777" stroke-width="1"/>
<text x="935.8" y="318.6" font-family="Liberation Sans, sans-serif" font-size="12" fill="#555" letter-spacing="-0.42">8,500</text>
<line x1="931" y1="363.4" x2="933.4" y2="363.4" stroke="#777" stroke-width="1"/>
<text x="935.8" y="366.1" font-family="Liberation Sans, sans-serif" font-size="12" fill="#555" letter-spacing="-0.42">8,400</text>
<line x1="931" y1="410.9" x2="933.4" y2="410.9" stroke="#777" stroke-width="1"/>
<text x="935.8" y="413.5" font-family="Liberation Sans, sans-serif" font-size="12" fill="#555" letter-spacing="-0.42">8,300</text>
<line x1="931" y1="458.4" x2="933.4" y2="458.4" stroke="#777" stroke-width="1"/>
<text x="935.8" y="461" font-family="Liberation Sans, sans-serif" font-size="12" fill="#555" letter-spacing="-0.42">8,200</text>
<line x1="931" y1="505.8" x2="933.4" y2="505.8" stroke="#777" stroke-width="1"/>
<text x="935.8" y="508.4" font-family="Liberation Sans, sans-serif" font-size="12" fill="#555" letter-spacing="-0.42">8,100</text>
<line x1="931" y1="553.2" x2="933.4" y2="553.2" stroke="#777" stroke-width="1"/>
<text x="935.8" y="555.9" font-family="Liberation Sans, sans-serif" font-size="12" fill="#555" letter-spacing="-0.42">8,000</text>
<line x1="931" y1="634.6" x2="933.4" y2="634.6" stroke="#666" stroke-width="1"/>
<text x="935.8" y="638.7" font-family="Liberation Sans, sans-serif" font-size="12" fill="#222" letter-spacing="-0.45"><tspan font-weight="bold">70</tspan><tspan fill="#777">.0</tspan></text>
<line x1="931" y1="661.4" x2="933.4" y2="661.4" stroke="#666" stroke-width="1"/>
<text x="935.8" y="665.5" font-family="Liberation Sans, sans-serif" font-size="12" fill="#555" letter-spacing="-0.45">60.0</text>
<line x1="931" y1="688.2" x2="933.4" y2="688.2" stroke="#666" stroke-width="1"/>
<text x="935.8" y="692.3" font-family="Liberation Sans, sans-serif" font-size="12" fill="#555" letter-spacing="-0.45">50.0</text>
<line x1="931" y1="715" x2="933.4" y2="715" stroke="#666" stroke-width="1"/>
<text x="935.8" y="719.1" font-family="Liberation Sans, sans-serif" font-size="12" fill="#555" letter-spacing="-0.45">40.0</text>
<line x1="931" y1="741.8" x2="933.4" y2="741.8" stroke="#666" stroke-width="1"/>
<text x="935.8" y="745.9" font-family="Liberation Sans, sans-serif" font-size="12" fill="#222" letter-spacing="-0.45"><tspan font-weight="bold">30</tspan><tspan fill="#777">.0</tspan></text>
<path d="M921.8 135.8L929.6 127.7H964.5Q967 127.7 967 130.2V141.4Q967 143.9 964.5 143.9H929.6Z" fill="#ffd600"/><text x="935.8" y="140" font-family="Liberation Sans, sans-serif" font-size="12" fill="#222" stroke="#222" stroke-width="0.25" letter-spacing="-0.45">8,880</text>
<path d="M921.8 205.2L929.6 197.1H964.5Q967 197.1 967 199.6V210.8Q967 213.3 964.5 213.3H929.6Z" fill="#00fbc5"/><text x="935.8" y="209.4" font-family="Liberation Sans, sans-serif" font-size="12" fill="#222" stroke="#222" stroke-width="0.25" letter-spacing="-0.45">8,733</text>
<path d="M921.8 246.6L929.6 238.5H979.7Q982.2 238.5 982.2 241V252.2Q982.2 254.7 979.7 254.7H929.6Z" fill="#5c57a3"/><text x="935.8" y="250.8" font-family="Liberation Sans, sans-serif" font-size="12" fill="#fff" stroke="#fff" stroke-width="0.25" letter-spacing="-0.45">8,645.50</text>
<path d="M921.8 275L929.6 266.9H964.5Q967 266.9 967 269.4V280.6Q967 283.1 964.5 283.1H929.6Z" fill="#ffd600"/><text x="935.8" y="279.2" font-family="Liberation Sans, sans-serif" font-size="12" fill="#222" stroke="#222" stroke-width="0.25" letter-spacing="-0.45">8,587</text>
<path d="M921.8 701.2L929.6 693.5H958.3Q960.8 693.5 960.8 696V706.4Q960.8 708.9 958.3 708.9H929.6Z" fill="#000"/><text x="935.8" y="705.4" font-family="Liberation Sans, sans-serif" font-size="12" fill="#fff" stroke="#fff" stroke-width="0.25" letter-spacing="-0.45">45.5</text>
<line x1="180.5" y1="749" x2="180.5" y2="754.8" stroke="#555" stroke-width="1"/>
<text x="180.8" y="766" font-family="Liberation Sans, sans-serif" font-size="11.8" fill="#484848" text-anchor="middle" letter-spacing="0.6">Dec</text>
<line x1="583.3" y1="749" x2="583.3" y2="754.8" stroke="#555" stroke-width="1"/>
<text x="583.5999999999999" y="766" font-family="Liberation Sans, sans-serif" font-size="11.8" fill="#484848" text-anchor="middle" letter-spacing="-0.25">Feb</text>
<line x1="762.2" y1="749" x2="762.2" y2="754.8" stroke="#555" stroke-width="1"/>
<text x="762.5" y="766" font-family="Liberation Sans, sans-serif" font-size="11.8" fill="#484848" text-anchor="middle" letter-spacing="0.55">Mar</text>
<line x1="380.5" y1="749" x2="380.5" y2="755.8" stroke="#555" stroke-width="1"/>
<rect x="380" y="759.1" width="1" height="1.2" fill="#555"/>
<rect x="380" y="763.1" width="1" height="1.2" fill="#555"/>
<rect x="380" y="766.9" width="1" height="1.2" fill="#555"/>
<text x="380.6" y="780.7" font-family="Liberation Sans, sans-serif" font-size="12" fill="#484848" text-anchor="middle" letter-spacing="-0.45">2025</text>
<rect x="4.4" y="787.9" width="17.6" height="11.7" rx="2.6" fill="#fff" stroke="#9c9c9c" stroke-width="1.25"/><line x1="6.4" y1="788.2" x2="20" y2="788.2" stroke="#9a9a9a" stroke-width="1.6"/><line x1="10" y1="785.7" x2="10" y2="789.1" stroke="#cdcdcd" stroke-width="1.5"/><line x1="16.4" y1="785.7" x2="16.4" y2="789.1" stroke="#cdcdcd" stroke-width="1.5"/><text x="13.2" y="797.4" font-family="Liberation Sans, sans-serif" font-size="9.3" fill="#c2c2c2" text-anchor="middle">5</text>
<rect x="49.1" y="787.9" width="17.6" height="11.7" rx="2.6" fill="#fff" stroke="#9c9c9c" stroke-width="1.25"/><line x1="51.1" y1="788.2" x2="64.7" y2="788.2" stroke="#9a9a9a" stroke-width="1.6"/><line x1="54.7" y1="785.7" x2="54.7" y2="789.1" stroke="#cdcdcd" stroke-width="1.5"/><line x1="61.1" y1="785.7" x2="61.1" y2="789.1" stroke="#cdcdcd" stroke-width="1.5"/><text x="57.9" y="797.4" font-family="Liberation Sans, sans-serif" font-size="9.3" fill="#c2c2c2" text-anchor="middle">8</text>
<rect x="93" y="787.9" width="17.6" height="11.7" rx="2.6" fill="#fff" stroke="#9c9c9c" stroke-width="1.25"/><line x1="95" y1="788.2" x2="108.6" y2="788.2" stroke="#9a9a9a" stroke-width="1.6"/><line x1="98.6" y1="785.7" x2="98.6" y2="789.1" stroke="#cdcdcd" stroke-width="1.5"/><line x1="105" y1="785.7" x2="105" y2="789.1" stroke="#cdcdcd" stroke-width="1.5"/><text x="101.8" y="797.4" font-family="Liberation Sans, sans-serif" font-size="9.3" fill="#c2c2c2" text-anchor="middle">4</text>
<g opacity="0.55"><rect x="137.2" y="784.5" width="20" height="15" fill="#fff"/><rect x="137.2" y="784.5" width="20" height="1.2" fill="#ee3a45"/><rect x="137.2" y="786.8" width="20" height="1.2" fill="#ee3a45"/><rect x="137.2" y="789.1" width="20" height="1.2" fill="#ee3a45"/><rect x="137.2" y="791.4" width="20" height="1.2" fill="#ee3a45"/><rect x="137.2" y="793.7" width="20" height="1.2" fill="#ee3a45"/><rect x="137.2" y="796" width="20" height="1.2" fill="#ee3a45"/><rect x="137.2" y="798.3" width="20" height="1.2" fill="#ee3a45"/><rect x="137.2" y="784.5" width="8.6" height="8.1" fill="#3c4a8c"/></g>
<rect x="183.2" y="787.9" width="17.6" height="11.7" rx="2.6" fill="#fff" stroke="#9c9c9c" stroke-width="1.25"/><line x1="185.2" y1="788.2" x2="198.8" y2="788.2" stroke="#9a9a9a" stroke-width="1.6"/><line x1="188.8" y1="785.7" x2="188.8" y2="789.1" stroke="#cdcdcd" stroke-width="1.5"/><line x1="195.2" y1="785.7" x2="195.2" y2="789.1" stroke="#cdcdcd" stroke-width="1.5"/><text x="192" y="797.4" font-family="Liberation Sans, sans-serif" font-size="9.3" fill="#c2c2c2" text-anchor="middle">4</text>
<rect x="227.2" y="787.9" width="17.6" height="11.7" rx="2.6" fill="#fff" stroke="#9c9c9c" stroke-width="1.25"/><line x1="229.2" y1="788.2" x2="242.8" y2="788.2" stroke="#9a9a9a" stroke-width="1.6"/><line x1="232.8" y1="785.7" x2="232.8" y2="789.1" stroke="#cdcdcd" stroke-width="1.5"/><line x1="239.2" y1="785.7" x2="239.2" y2="789.1" stroke="#cdcdcd" stroke-width="1.5"/><text x="236" y="797.4" font-family="Liberation Sans, sans-serif" font-size="9.3" fill="#c2c2c2" text-anchor="middle">4</text>
<rect x="272.2" y="787.9" width="17.6" height="11.7" rx="2.6" fill="#fff" stroke="#9c9c9c" stroke-width="1.25"/><line x1="274.2" y1="788.2" x2="287.8" y2="788.2" stroke="#9a9a9a" stroke-width="1.6"/><line x1="277.8" y1="785.7" x2="277.8" y2="789.1" stroke="#cdcdcd" stroke-width="1.5"/><line x1="284.2" y1="785.7" x2="284.2" y2="789.1" stroke="#cdcdcd" stroke-width="1.5"/><text x="281" y="797.4" font-family="Liberation Sans, sans-serif" font-size="9.3" fill="#c2c2c2" text-anchor="middle">10</text>
<rect x="316.8" y="787.9" width="17.6" height="11.7" rx="2.6" fill="#fff" stroke="#9c9c9c" stroke-width="1.25"/><line x1="318.8" y1="788.2" x2="332.4" y2="788.2" stroke="#9a9a9a" stroke-width="1.6"/><line x1="322.4" y1="785.7" x2="322.4" y2="789.1" stroke="#cdcdcd" stroke-width="1.5"/><line x1="328.8" y1="785.7" x2="328.8" y2="789.1" stroke="#cdcdcd" stroke-width="1.5"/><text x="325.6" y="797.4" font-family="Liberation Sans, sans-serif" font-size="9.3" fill="#c2c2c2" text-anchor="middle">2</text>
<g opacity="0.55"><rect x="359.8" y="784.5" width="20" height="15" fill="#fff"/><rect x="359.8" y="784.5" width="20" height="1.2" fill="#ee3a45"/><rect x="359.8" y="786.8" width="20" height="1.2" fill="#ee3a45"/><rect x="359.8" y="789.1" width="20" height="1.2" fill="#ee3a45"/><rect x="359.8" y="791.4" width="20" height="1.2" fill="#ee3a45"/><rect x="359.8" y="793.7" width="20" height="1.2" fill="#ee3a45"/><rect x="359.8" y="796" width="20" height="1.2" fill="#ee3a45"/><rect x="359.8" y="798.3" width="20" height="1.2" fill="#ee3a45"/><rect x="359.8" y="784.5" width="8.6" height="8.1" fill="#3c4a8c"/></g>
<rect x="405.9" y="787.9" width="17.6" height="11.7" rx="2.6" fill="#fff" stroke="#9c9c9c" stroke-width="1.25"/><line x1="407.9" y1="788.2" x2="421.5" y2="788.2" stroke="#9a9a9a" stroke-width="1.6"/><line x1="411.5" y1="785.7" x2="411.5" y2="789.1" stroke="#cdcdcd" stroke-width="1.5"/><line x1="417.9" y1="785.7" x2="417.9" y2="789.1" stroke="#cdcdcd" stroke-width="1.5"/><text x="414.7" y="797.4" font-family="Liberation Sans, sans-serif" font-size="9.3" fill="#c2c2c2" text-anchor="middle">3</text>
<rect x="450.8" y="787.9" width="17.6" height="11.7" rx="2.6" fill="#fff" stroke="#9c9c9c" stroke-width="1.25"/><line x1="452.8" y1="788.2" x2="466.4" y2="788.2" stroke="#9a9a9a" stroke-width="1.6"/><line x1="456.4" y1="785.7" x2="456.4" y2="789.1" stroke="#cdcdcd" stroke-width="1.5"/><line x1="462.8" y1="785.7" x2="462.8" y2="789.1" stroke="#cdcdcd" stroke-width="1.5"/><text x="459.6" y="797.4" font-family="Liberation Sans, sans-serif" font-size="9.3" fill="#c2c2c2" text-anchor="middle">9</text>
<g opacity="0.6"><svg x="493.4" y="784.1" width="21.5" height="15.8" viewBox="0 0 60 40" preserveAspectRatio="none"><rect width="60" height="40" fill="#2a3f6e"/><path d="M0 0L60 40M60 0L0 40" stroke="#fff" stroke-width="8"/><path d="M0 0L60 40M60 0L0 40" stroke="#d9343f" stroke-width="3"/><path d="M30 0V40M0 20H60" stroke="#fff" stroke-width="13"/><path d="M30 0V40M0 20H60" stroke="#d9343f" stroke-width="7.5"/></svg></g>
<rect x="541" y="787.9" width="17.6" height="11.7" rx="2.6" fill="#fff" stroke="#9c9c9c" stroke-width="1.25"/><line x1="543" y1="788.2" x2="556.6" y2="788.2" stroke="#9a9a9a" stroke-width="1.6"/><line x1="546.6" y1="785.7" x2="546.6" y2="789.1" stroke="#cdcdcd" stroke-width="1.5"/><line x1="553" y1="785.7" x2="553" y2="789.1" stroke="#cdcdcd" stroke-width="1.5"/><text x="549.8" y="797.4" font-family="Liberation Sans, sans-serif" font-size="9.3" fill="#c2c2c2" text-anchor="middle">6</text>
<rect x="585.9" y="787.9" width="17.6" height="11.7" rx="2.6" fill="#fff" stroke="#9c9c9c" stroke-width="1.25"/><line x1="587.9" y1="788.2" x2="601.5" y2="788.2" stroke="#9a9a9a" stroke-width="1.6"/><line x1="591.5" y1="785.7" x2="591.5" y2="789.1" stroke="#cdcdcd" stroke-width="1.5"/><line x1="597.9" y1="785.7" x2="597.9" y2="789.1" stroke="#cdcdcd" stroke-width="1.5"/><text x="594.7" y="797.4" font-family="Liberation Sans, sans-serif" font-size="9.3" fill="#c2c2c2" text-anchor="middle">7</text>
<rect x="629.8" y="787.9" width="17.6" height="11.7" rx="2.6" fill="#fff" stroke="#9c9c9c" stroke-width="1.25"/><line x1="631.8" y1="788.2" x2="645.4" y2="788.2" stroke="#9a9a9a" stroke-width="1.6"/><line x1="635.4" y1="785.7" x2="635.4" y2="789.1" stroke="#cdcdcd" stroke-width="1.5"/><line x1="641.8" y1="785.7" x2="641.8" y2="789.1" stroke="#cdcdcd" stroke-width="1.5"/><text x="638.6" y="797.4" font-family="Liberation Sans, sans-serif" font-size="9.3" fill="#c2c2c2" text-anchor="middle">7</text>
<rect x="674.8" y="787.9" width="17.6" height="11.7" rx="2.6" fill="#fff" stroke="#9c9c9c" stroke-width="1.25"/><line x1="676.8" y1="788.2" x2="690.4" y2="788.2" stroke="#9a9a9a" stroke-width="1.6"/><line x1="680.4" y1="785.7" x2="680.4" y2="789.1" stroke="#cdcdcd" stroke-width="1.5"/><line x1="686.8" y1="785.7" x2="686.8" y2="789.1" stroke="#cdcdcd" stroke-width="1.5"/><text x="683.6" y="797.4" font-family="Liberation Sans, sans-serif" font-size="9.3" fill="#c2c2c2" text-anchor="middle">5</text>
<g opacity="0.55"><rect x="718.4" y="784.5" width="20" height="15" fill="#fff"/><rect x="718.4" y="784.5" width="20" height="1.2" fill="#ee3a45"/><rect x="718.4" y="786.8" width="20" height="1.2" fill="#ee3a45"/><rect x="718.4" y="789.1" width="20" height="1.2" fill="#ee3a45"/><rect x="718.4" y="791.4" width="20" height="1.2" fill="#ee3a45"/><rect x="718.4" y="793.7" width="20" height="1.2" fill="#ee3a45"/><rect x="718.4" y="796" width="20" height="1.2" fill="#ee3a45"/><rect x="718.4" y="798.3" width="20" height="1.2" fill="#ee3a45"/><rect x="718.4" y="784.5" width="8.6" height="8.1" fill="#3c4a8c"/></g>
<rect x="763.5" y="787.9" width="17.6" height="11.7" rx="2.6" fill="#fff" stroke="#9c9c9c" stroke-width="1.25"/><line x1="765.5" y1="788.2" x2="779.1" y2="788.2" stroke="#9a9a9a" stroke-width="1.6"/><line x1="769.1" y1="785.7" x2="769.1" y2="789.1" stroke="#cdcdcd" stroke-width="1.5"/><line x1="775.5" y1="785.7" x2="775.5" y2="789.1" stroke="#cdcdcd" stroke-width="1.5"/><text x="772.3" y="797.4" font-family="Liberation Sans, sans-serif" font-size="9.3" fill="#c2c2c2" text-anchor="middle">11</text>
<rect x="808.7" y="787.9" width="17.6" height="11.7" rx="2.6" fill="#fff" stroke="#9c9c9c" stroke-width="1.25"/><line x1="810.7" y1="788.2" x2="824.3" y2="788.2" stroke="#9a9a9a" stroke-width="1.6"/><line x1="814.3" y1="785.7" x2="814.3" y2="789.1" stroke="#cdcdcd" stroke-width="1.5"/><line x1="820.7" y1="785.7" x2="820.7" y2="789.1" stroke="#cdcdcd" stroke-width="1.5"/><text x="817.5" y="797.4" font-family="Liberation Sans, sans-serif" font-size="9.3" fill="#c2c2c2" text-anchor="middle">5</text>
</g>
</svg>
</body></html>
